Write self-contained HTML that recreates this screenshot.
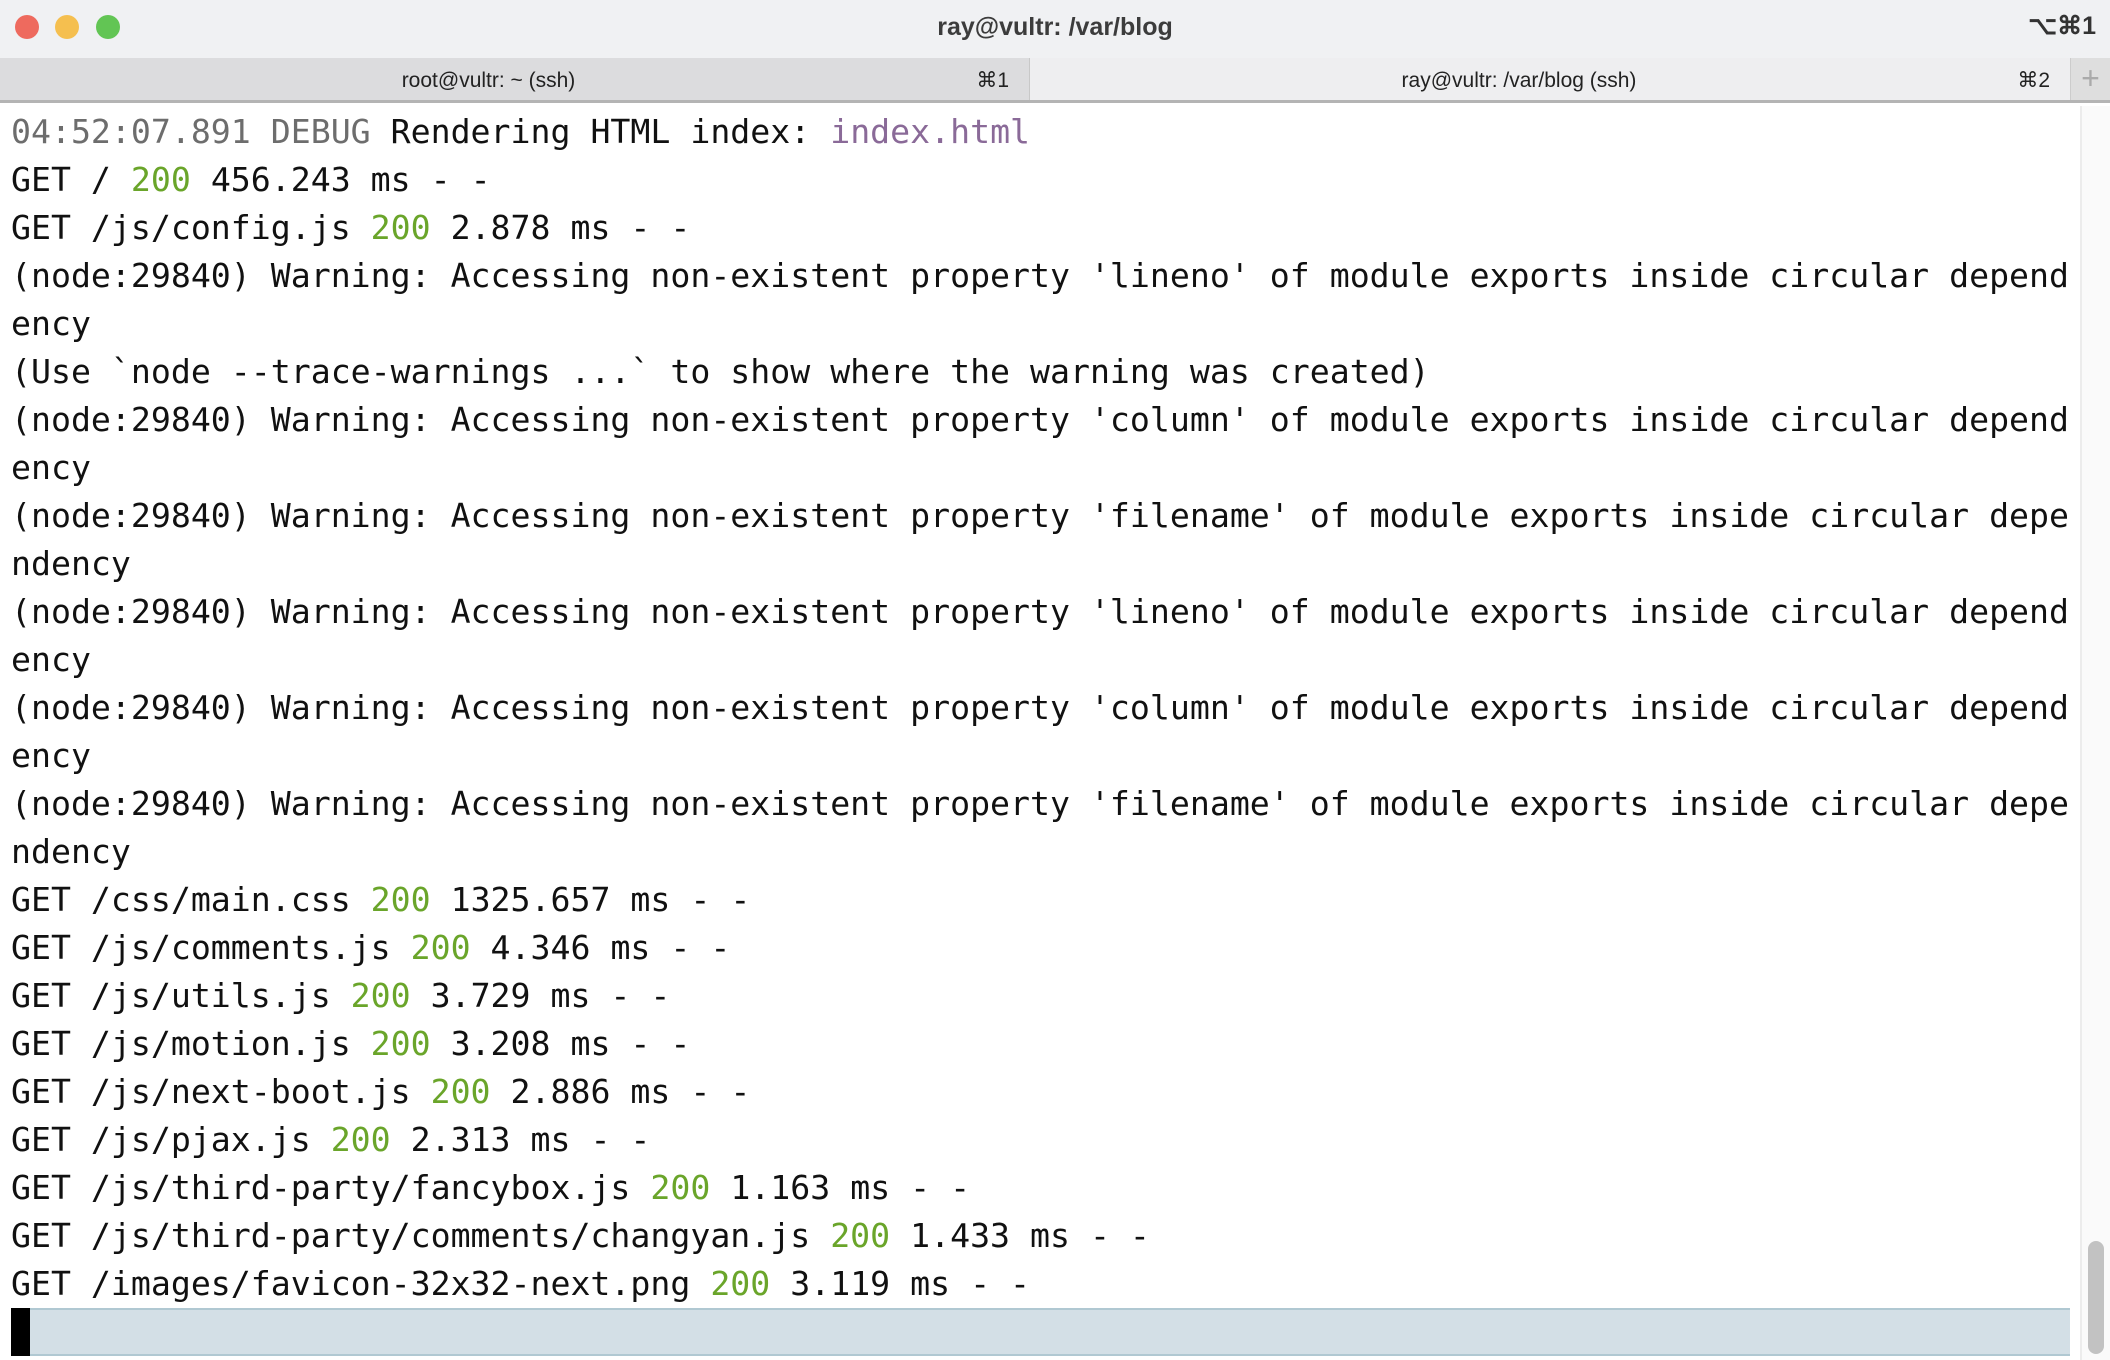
<!DOCTYPE html>
<html><head><meta charset="utf-8"><style>
*{margin:0;padding:0;box-sizing:border-box}
html,body{width:2110px;height:1360px;overflow:hidden;background:#fff}
#title{position:absolute;left:0;top:0;width:2110px;height:58px;background:#f0f1f3;font-family:"Liberation Sans",sans-serif}
.dot{position:absolute;top:15px;width:24px;height:24px;border-radius:50%}
#tt{position:absolute;left:0;width:2110px;top:13px;text-align:center;font-size:25px;font-weight:bold;color:#3c3c3c}
#kb{position:absolute;right:14px;top:11px;font-size:25px;font-weight:bold;color:#333}
#tabs{position:absolute;left:0;top:58px;width:2110px;height:45px;border-bottom:3px solid #b4b4b4;font-family:"Liberation Sans",sans-serif;font-size:21px;color:#222}
.tab{position:absolute;top:0;height:42px;line-height:46px}
.tab .n{position:absolute;left:0;right:0;text-align:center}
.tab .k{position:absolute;right:20px}
#term{position:absolute;left:11px;top:108px;width:2070px;height:1200px;overflow:hidden;font-family:"DejaVu Sans Mono","Liberation Mono",monospace;font-size:33.2px;color:#111}
#term div{height:48px;line-height:48px;white-space:pre}
.g{color:#6aa52a}.d{color:#6d6d6d}.p{color:#8a6a98}
</style></head><body>
<div id="title">
<div class="dot" style="left:15px;background:#ee6a5e;"></div>
<div class="dot" style="left:55px;background:#f5bf4f;"></div>
<div class="dot" style="left:96px;background:#62c554;"></div>
<div id="tt">ray@vultr: /var/blog</div>
<div id="kb">⌥⌘1</div>
</div>
<div id="tabs">
<div class="tab" style="left:0;width:1030px;background:#dcdcde;border-right:1px solid #c8c8c8"><span class="n" style="right:52px">root@vultr: ~ (ssh)</span><span class="k">⌘1</span></div>
<div class="tab" style="left:1030px;width:1040px;background:#eeeef0"><span class="n" style="right:62px">ray@vultr: /var/blog (ssh)</span><span class="k">⌘2</span></div>
<div style="position:absolute;left:2070px;top:0;width:40px;height:42px;background:#dedede;border-left:1px solid #ccc;color:#aaa;font-size:32px;text-align:center;line-height:40px">+</div>
</div>
<div style="position:absolute;left:2080px;top:106px;width:30px;height:1254px;background:#fafafa;border-left:2px solid #ececec"></div>
<div style="position:absolute;left:2088px;top:1241px;width:16px;height:113px;background:#c2c2c2;border-radius:8px"></div>
<div style="position:absolute;left:11px;top:1308px;width:2059px;height:48px;background:#d3dfe6;border-top:2px solid #b0c8d2;border-bottom:2px solid #b0c8d2"></div>
<div style="position:absolute;left:11px;top:1308px;width:19px;height:48px;background:#000"></div>
<div id="term"><div><span class="d">04:52:07.891 DEBUG</span> Rendering HTML index: <span class="p">index.html</span></div><div>GET / <span class="g">200</span> 456.243 ms - -</div><div>GET /js/config.js <span class="g">200</span> 2.878 ms - -</div><div>(node:29840) Warning: Accessing non-existent property 'lineno' of module exports inside circular depend</div><div>ency</div><div>(Use `node --trace-warnings ...` to show where the warning was created)</div><div>(node:29840) Warning: Accessing non-existent property 'column' of module exports inside circular depend</div><div>ency</div><div>(node:29840) Warning: Accessing non-existent property 'filename' of module exports inside circular depe</div><div>ndency</div><div>(node:29840) Warning: Accessing non-existent property 'lineno' of module exports inside circular depend</div><div>ency</div><div>(node:29840) Warning: Accessing non-existent property 'column' of module exports inside circular depend</div><div>ency</div><div>(node:29840) Warning: Accessing non-existent property 'filename' of module exports inside circular depe</div><div>ndency</div><div>GET /css/main.css <span class="g">200</span> 1325.657 ms - -</div><div>GET /js/comments.js <span class="g">200</span> 4.346 ms - -</div><div>GET /js/utils.js <span class="g">200</span> 3.729 ms - -</div><div>GET /js/motion.js <span class="g">200</span> 3.208 ms - -</div><div>GET /js/next-boot.js <span class="g">200</span> 2.886 ms - -</div><div>GET /js/pjax.js <span class="g">200</span> 2.313 ms - -</div><div>GET /js/third-party/fancybox.js <span class="g">200</span> 1.163 ms - -</div><div>GET /js/third-party/comments/changyan.js <span class="g">200</span> 1.433 ms - -</div><div>GET /images/favicon-32x32-next.png <span class="g">200</span> 3.119 ms - -</div></div>
</body></html>
